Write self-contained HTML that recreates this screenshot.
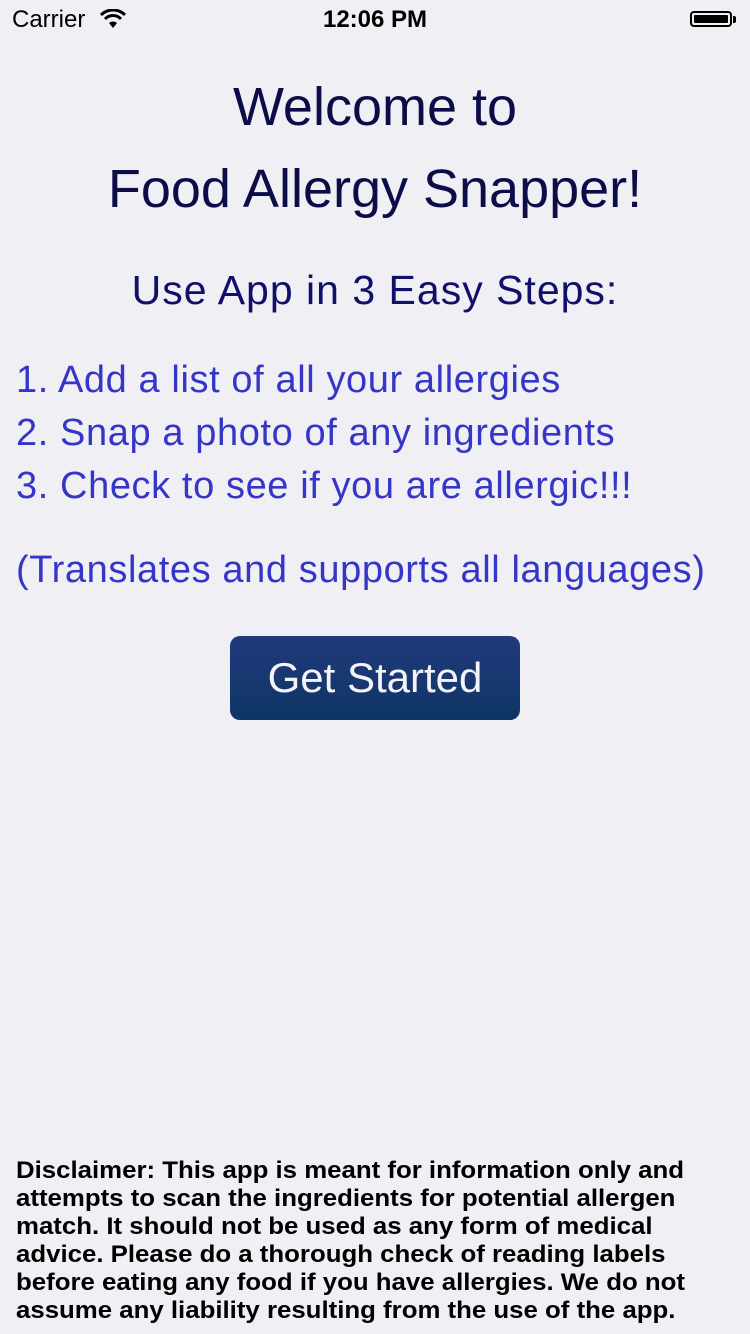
<!DOCTYPE html>
<html><head><meta charset="utf-8"><style>
html,body{margin:0;padding:0;width:750px;height:1334px;background:#efeff4;overflow:hidden;font-family:"Liberation Sans",sans-serif;position:relative}
.a{position:absolute;white-space:nowrap}
.c{left:0;width:750px;text-align:center}
.s{left:16px;font-size:38px;color:#3535c8;letter-spacing:0.6px}
.d{left:16px;font-size:24px;font-weight:bold;color:#000;transform:scaleX(1.075);transform-origin:0 0}
</style></head><body>
<div class="a" style="left:12px;top:6px;font-size:24px;color:#000">Carrier</div>
<svg class="a" style="left:100px;top:9px" width="26" height="20" viewBox="0 0 26 20"><path d="M13 19 L9 14 A6 6 0 0 1 17 14 Z" fill="#000"/><path d="M5 10 A11 11 0 0 1 21 10" stroke="#000" stroke-width="3" fill="none"/><path d="M1 6 A17 17 0 0 1 25 6" stroke="#000" stroke-width="3" fill="none"/></svg>
<div class="a c" style="top:6px;font-size:24px;font-weight:bold;color:#000">12:06 PM</div>
<div class="a" style="left:690px;top:11px;width:42px;height:16px;border:2px solid #000;border-radius:4px;box-sizing:border-box;padding:2px"><div style="background:#000;height:100%;border-radius:1px"></div></div>
<div class="a" style="left:733px;top:16px;width:3px;height:7px;background:#000;border-radius:0 2px 2px 0"></div>
<div class="a c" style="top:76px;font-size:54px;color:#0c0c48">Welcome to</div>
<div class="a c" style="top:158px;font-size:54px;color:#0c0c48">Food Allergy Snapper!</div>
<div class="a c" style="top:267px;font-size:41px;color:#10106a;letter-spacing:1px">Use App in 3 Easy Steps:</div>
<div class="a s" style="top:359px">1. Add a list of all your allergies</div>
<div class="a s" style="top:412px">2. Snap a photo of any ingredients</div>
<div class="a s" style="top:465px">3. Check to see if you are allergic!!!</div>
<div class="a s" style="top:549px">(Translates and supports all languages)</div>
<div class="a" style="left:230px;top:636px;width:290px;height:84px;border-radius:10px;background:linear-gradient(#213a7c,#0e3565);color:#f4f4f8;font-size:42px;text-align:center;line-height:84px">Get Started</div>
<div class="a d" style="top:1157px">Disclaimer: This app is meant for information only and</div>
<div class="a d" style="top:1185px">attempts to scan the ingredients for potential allergen</div>
<div class="a d" style="top:1213px">match. It should not be used as any form of medical</div>
<div class="a d" style="top:1241px">advice. Please do a thorough check of reading labels</div>
<div class="a d" style="top:1269px">before eating any food if you have allergies. We do not</div>
<div class="a d" style="top:1297px">assume any liability resulting from the use of the app.</div>
</body></html>
